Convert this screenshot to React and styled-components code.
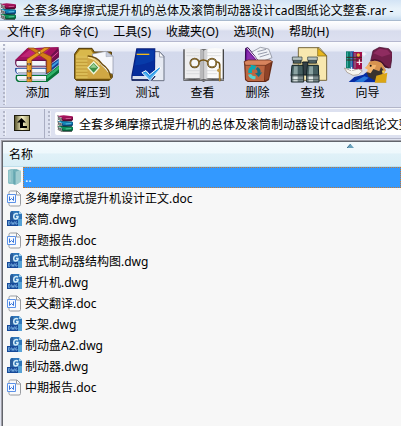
import React from 'react';
import styled, { createGlobalStyle } from 'styled-components';

const ARCHIVE = '全套多绳摩擦式提升机的总体及滚筒制动器设计cad图纸论文整套.rar';

const MENUS = ['文件(F)', '命令(C)', '工具(S)', '收藏夹(O)', '选项(N)', '帮助(H)'];

const FILES = [
  { name: '多绳摩擦式提升机设计正文.doc', type: 'doc' },
  { name: '滚筒.dwg', type: 'dwg' },
  { name: '开题报告.doc', type: 'doc' },
  { name: '盘式制动器结构图.dwg', type: 'dwg' },
  { name: '提升机.dwg', type: 'dwg' },
  { name: '英文翻译.doc', type: 'doc' },
  { name: '支架.dwg', type: 'dwg' },
  { name: '制动盘A2.dwg', type: 'dwg' },
  { name: '制动器.dwg', type: 'dwg' },
  { name: '中期报告.doc', type: 'doc' },
];

const GlobalStyle = createGlobalStyle`
  html, body, #root {
    height: 100%;
  }

  body {
    margin: 0;
    overflow: hidden;
    background: #f7f7f7;
  }

  body, button, input, table {
    font-family: "Noto Sans", "Noto Sans CJK SC", sans-serif;
    font-size: 12px;
    line-height: 16px;
    color: #000;
  }

  button {
    padding: 0;
    border: 0;
    background: none;
  }

  svg {
    display: block;
    flex: none;
  }
`;

const Window = styled.div`
  display: flex;
  flex-direction: column;
  height: 100%;
  background: #dfe3f0;
`;

const TitleBar = styled.header`
  display: flex;
  align-items: center;
  gap: 6px;
  height: 21px;
  flex: none;
  box-sizing: border-box;
  padding-top: 2px;
  border-bottom: 1px solid #a9bace;
  background: linear-gradient(to bottom, #d3e4f5, #e8f2fa 45%, #e0edf8 75%, #c5daef);
  white-space: nowrap;
  overflow: hidden;
`;

const Title = styled.h1`
  margin: 0;
  font-size: 12px;
  font-weight: 400;
`;

const MenuBar = styled.nav`
  display: flex;
  align-items: center;
  gap: 15px;
  height: 21px;
  flex: none;
  box-sizing: border-box;
  padding: 2px 0 0 7px;
  border-bottom: 1px solid #b5b8cf;
  background: linear-gradient(#ffffff, #eef0f8 40%, #d8dced 50%, #dde0f0);
  white-space: nowrap;
`;

const MenuButton = styled.button`
  flex: none;
`;

const Grip = styled.span`
  width: 2px;
  flex: none;
  align-self: stretch;
  margin: 2px 5px 2px 3px;
  background: repeating-linear-gradient(#b2b6c8 0 2px, transparent 2px 4px);
  box-shadow: 1px 0 #eef0f8;
`;

const ToolBar = styled.div`
  display: flex;
  height: 66px;
  flex: none;
  box-sizing: border-box;
  border-bottom: 1px solid #b3b6c9;
  background: linear-gradient(#fbfcfe, #e8ebf6 9px, #d3d9ec 10px, #d7dcee);
  overflow: hidden;
`;

const ToolButton = styled.button`
  display: flex;
  flex-direction: column;
  align-items: center;
  width: 55px;
  flex: none;
  padding-top: 4px;
  gap: 1px;
`;

const AddressBar = styled.div`
  display: flex;
  align-items: stretch;
  height: 31px;
  flex: none;
  box-sizing: border-box;
  border-top: 1px solid #f5f6fb;
  border-bottom: 1px solid #b3b6c9;
  background: #dde1f0;
`;

const UpButton = styled.button`
  display: flex;
  align-items: center;
  padding: 0 14px 2px 4px;
  border-right: 1px solid #a9adc2;
`;

const Address = styled.label`
  display: flex;
  align-items: center;
  gap: 5px;
  flex: 1;
  min-width: 0;
  margin: 3px 0;
  padding-left: 2px;
  border-radius: 2px 0 0 2px;
  background: #fff;
`;

const AddressInput = styled.input`
  flex: 1;
  min-width: 0;
  padding: 2px 0 0;
  border: 0;
  outline: 0;
  background: none;
`;

const Panel = styled.main`
  flex: 1;
  min-height: 0;
  margin: 1px 0 0 1px;
  border-top: 1px solid #a0a0a8;
  border-left: 1px solid #a0a0a8;
`;

const Sheet = styled.div`
  height: 100%;
  box-sizing: border-box;
  border-top: 1px solid #62656c;
  border-left: 1px solid #62656c;
  background: #f7f7f7;
  overflow: hidden;
`;

const FileTable = styled.table`
  width: 100%;
  border-collapse: collapse;
`;

const HeadCell = styled.th`
  position: relative;
  height: 24px;
  padding: 0;
  box-sizing: border-box;
  border-bottom: 1px solid #bfdfec;
  background: linear-gradient(#f3fafd, #eef8fc 45%, #e0f1f8 50%, #d9eef6);
  text-align: left;
`;

const SortButton = styled.button`
  display: block;
  width: 100%;
  padding: 2px 0 0 6px;
  text-align: left;
`;

const SortMark = styled.svg`
  position: absolute;
  top: 2px;
  left: 50%;
  margin-left: 145px;
`;

const FileCell = styled.td`
  padding: 0;
`;

const FileRow = styled.div`
  display: flex;
  align-items: center;
  height: 21px;
  padding-left: 4px;
`;

const FileName = styled.span`
  flex: 1;
  box-sizing: border-box;
  height: 21px;
  padding: 2px 1px 0;
  border: 1px dotted ${({ $selected }) => ($selected ? '#c87830' : 'transparent')};
  background: ${({ $selected }) => ($selected ? '#3399ff' : 'transparent')};
  color: ${({ $selected }) => ($selected ? '#fff' : '#000')};
  white-space: nowrap;
`;

// the big toolbar drawings are drawn on a grid three times their size
const ToolSvg = ({ left, children }) => (
  <svg width="48" height="38" viewBox={`${left} 18 144 114`} aria-hidden="true">
    {children}
  </svg>
);

const AddIcon = () => (
  <ToolSvg left={42}>
    <path d="M48 105 L140 105 L177 76 V98 L142 126 H54 Q44 122 48 105Z" fill="#087438" />
    <path d="M140 108 L177 78 V88 L140 118Z" fill="#31b46a" />
    <path d="M46 84 L137 84 L176 56 V74 L140 103 H54 Q43 98 46 84Z" fill="#123f96" />
    <path d="M140 87 L176 60 V67 L140 96Z" fill="#3f9ddd" />
    <path d="M46 60 L82 25 L176 22 L177 52 L140 82 H54 Q43 77 46 60Z" fill="#67104b" />
    <path d="M46 60 L82 25 L176 22 L141 59Z" fill="#a3125f" />
    <path d="M61 51 L91 28 L151 25 L123 50Z" fill="#c02474" />
    <path d="M140 61 L176 28 V48 L140 77Z" fill="#7a0f50" />
    <path d="M142 65 L175 36" stroke="#df4c9c" strokeWidth="3" />
    <path d="M50 63 H137 V79 H54 Q46 73 50 63Z M50 86 H137 V101 H54 Q46 95 50 86Z M52 108 H138 V123 H58 Q48 118 52 108Z" fill="#f4f5fb" />
    <path d="M54 77 H136 M54 98 H136 M57 120 H137" stroke="#a5adbc" strokeWidth="3" />
    <path d="M84 24 L101 24 L154 50 V92 L140 100 V60Z" fill="#d47e19" stroke="#8d4911" strokeWidth="2" />
    <path d="M133 23 L150 23 L95 60 V125 H81 V57Z" fill="#e79820" stroke="#914c0b" strokeWidth="2" />
    <path d="M84 59 V124" stroke="#ffd35a" strokeWidth="2" />
    <path d="M82 69 h11 v7 h-11z M82 90 h11 v7 h-11z M82 111 h11 v7 h-11z" fill="#503016" />
    <circle cx="87" cy="72" r="2" fill="#fff" />
    <circle cx="87" cy="93" r="2" fill="#fff" />
    <circle cx="87" cy="114" r="2" fill="#fff" />
    <circle cx="118" cy="38" r="4" fill="#fff0a8" stroke="#6d3c0e" strokeWidth="2" />
  </ToolSvg>
);

const ExtractIcon = () => (
  <ToolSvg left={207}>
    <path d="M224 116 V42 L236 25 H276 L283 36 H334 L337 112 L328 121 H229Z" fill="#9a7210" stroke="#4a3508" strokeWidth="3" />
    <path d="M227 46 L240 29 H272 L279 40 L276 48 H227Z" fill="#d9b84c" />
    <path d="M227 47 H328 V117 H227Z" fill="#dbbc56" />
    <path d="M228 57 H320 M228 67 H320 M228 77 H318 M228 87 H312 M228 97 H314 M228 107 H320" stroke="#bf9836" strokeWidth="3" />
    <path d="M277 42 L318 34 L339 48 V102 L310 94 L280 63Z" fill="#f6f7fb" stroke="#888fa1" strokeWidth="2" />
    <path d="M318 34 V50 L338 49Z" fill="#c6ccdb" stroke="#7e8798" />
    <path d="M262 48 Q295 56 304 76 Q323 91 334 115 L329 120 L263 115Z" fill="#d0a744" />
    <path d="M263 48 Q291 49 307 73 Q329 87 333 115" fill="none" stroke="#6d4c0b" strokeWidth="4" />
    <path d="M264 52 Q288 56 299 75" fill="none" stroke="#f8df91" strokeWidth="4" />
    <path d="M281 66 L297 83 L281 101 L264 83Z" fill="#3f9147" stroke="#eff5db" strokeWidth="4" />
    <path d="M281 71 L291 83 H270Z" fill="#99cf92" />
    <path d="M226 118 H330" stroke="#725008" strokeWidth="4" />
  </ToolSvg>
);

const TestIcon = () => (
  <ToolSvg left={-3}>
    <path d="M79 35 H104 L117 49 V122 H82Z" fill="#e6eaf3" stroke="#6c7485" strokeWidth="3" />
    <path d="M103 35 L104 51 H117Z" fill="#fff" stroke="#7b8497" strokeWidth="2" />
    <path d="M34 25 H91 L90 108 Q87 118 76 121 H20 Q18 115 19 107Z" fill="#071d73" />
    <path d="M36 28 H90 L88 107 H22Z" fill="#062d9c" />
    <path d="M39 31 H87 L86 61 Q62 75 30 76Z" fill="#0849b5" opacity=".5" />
    <path d="M23 108 H83 L77 119 H22Z" fill="#d9dfed" />
    <path d="M20 120 H78 L90 108" fill="none" stroke="#00104f" strokeWidth="5" />
    <path d="M35 43 H73" stroke="#efb91b" strokeWidth="4" />
    <path d="M51 98 L63 92 L74 104 L103 81 L108 84 L75 122Z" fill="#58b4f3" stroke="#fff" strokeWidth="3" />
    <path d="M55 99 L62 97 L74 110 L101 86" fill="none" stroke="#168bdf" strokeWidth="3" />
  </ToolSvg>
);

const ViewIcon = () => (
  <ToolSvg left={162}>
    <path d="M175 28 H297 V122 H242 L236 126 L229 122 H175Z" fill="#454546" />
    <path d="M179 26 Q215 21 235 31 V117 Q211 111 179 116Z" fill="#eeeeef" />
    <path d="M238 31 Q259 20 293 26 V116 Q260 111 238 117Z" fill="#fafafa" />
    <path d="M225 28 L236 32 V118 L224 114Z" fill="#b9b9bb" />
    <path d="M238 32 L247 28 V113 L238 117Z" fill="#d5d5d7" />
    <path d="M184 38 H224 M184 47 H222 M184 92 H226 M184 101 H225 M245 38 H289 M245 47 H287 M244 92 H276 M244 101 H276" stroke="#d0d1d4" strokeWidth="2" />
    <path d="M176 119 Q213 112 236 121 Q261 112 296 119" fill="none" stroke="#9a9a9d" strokeWidth="3" />
    <circle cx="209" cy="69" r="13" fill="#f5f6f7" stroke="#48340d" strokeWidth="5" />
    <circle cx="261" cy="69" r="13" fill="#fff" stroke="#48340d" strokeWidth="5" />
    <circle cx="209" cy="69" r="13" fill="none" stroke="#c8a454" strokeWidth="2" />
    <circle cx="261" cy="69" r="13" fill="none" stroke="#c8a454" strokeWidth="2" />
    <path d="M222 65 Q235 55 248 65 M275 66 Q286 65 284 82 V124" fill="none" stroke="#735313" strokeWidth="5" />
    <path d="M284 84 V123" stroke="#c29237" strokeWidth="3" />
    <circle cx="281" cy="91" r="5" fill="#c29a45" />
  </ToolSvg>
);

const DeleteIcon = () => (
  <ToolSvg left={-3}>
    <path d="M47 38 L76 22 L101 27 L111 53 L78 66 L55 60Z" fill="#f0f2f7" stroke="#777b89" strokeWidth="2" />
    <path d="M67 35 L93 28 M69 43 L97 36 M74 51 L103 42" stroke="#969bab" strokeWidth="3" />
    <path d="M32 25 L39 23 L72 65 H31Z" fill="#6e1597" stroke="#33094f" strokeWidth="3" />
    <path d="M37 32 L62 61 H36Z" fill="#8a2fb0" />
    <path d="M37 25 L70 64" stroke="#fff" strokeWidth="3" />
    <path d="M27 65 L37 60 H103 L113 66 L102 120 L92 126 H38 L30 120Z" fill="#672b17" />
    <path d="M31 71 H90 L87 123 H39 L33 118Z" fill="#bd6742" />
    <path d="M91 73 L108 65 L100 116 L89 122Z" fill="#8f4227" />
    <path d="M27 65 L39 60 H104 L113 65 L92 76 H31Z" fill="#d8845d" stroke="#5f2915" strokeWidth="2" />
    <path d="M40 99 Q38 85 49 79 L45 74 L64 77 L58 91 L54 86 Q49 91 51 99Z" fill="#08aab4" />
    <path d="M68 81 Q79 88 76 98 L82 97 L71 111 L60 100 L67 99 Q69 91 62 88Z" fill="#126d83" />
    <path d="M39 104 L48 102 Q52 110 62 109 L61 118 Q44 118 39 104Z" fill="#59d2cd" />
  </ToolSvg>
);

const FindIcon = () => (
  <ToolSvg left={162}>
    <path d="M190 23 H253 L275 47 V121 H190Z" fill="#f8e8af" stroke="#77683b" strokeWidth="3" />
    <path d="M248 24 V48 H275Z" fill="#e8b71d" stroke="#796115" strokeWidth="2" />
    <path d="M203 66 H219 V105 H203Z" fill="#344046" stroke="#11191d" strokeWidth="3" />
    {[0, 46].map((x) => (
      <g key={x} transform={`translate(${x} 0)`}>
        <path d="M175 55 H198 V70 H175Z" fill="#4d6063" stroke="#182426" strokeWidth="3" />
        <path d="M172 51 H201 V61 H172Z" fill="#b7c3c1" stroke="#293638" strokeWidth="2" />
        <path d="M171 76 H204 L205 107 H168Z" fill="#455e60" stroke="#122225" strokeWidth="3" />
        <path d="M177 79 H188 V105 H175Z" fill="#8ba3a2" />
        <path d="M169 105 H206 V126 H169Z" fill="#7d8c8d" stroke="#192729" strokeWidth="3" />
        <path d="M175 107 H188 V124 H175Z" fill="#e0e8e6" />
        <path d="M168 108 H206 M169 119 H206" stroke="#314144" strokeWidth="2" />
        <path d="M173 72 H203" stroke="#b7a568" strokeWidth="3" />
      </g>
    ))}
  </ToolSvg>
);

const WizardIcon = () => (
  <ToolSvg left={327}>
    <path d="M341 126 L358 111 L385 104 L401 91 L427 100 L455 127Z" fill="#062ca4" />
    <path d="M358 125 L388 109 L401 113 L385 126Z" fill="#2877d8" />
    <path d="M396 79 L403 66 L412 60 L439 66 L453 91 L445 104 L424 115 L402 100Z" fill="#d69350" />
    <path d="M401 73 L389 84 L399 89 L393 98 L413 99 L424 76Z" fill="#f3b66e" />
    <path d="M394 96 L407 100 L415 87 L433 94 L438 80 L447 92 L438 108 L421 122 L400 110Z" fill="#3a332e" />
    <path d="M424 107 L457 98 L453 128 H419Z" fill="#dba615" />
    <path d="M407 63 L414 32 L433 22 L461 26 L473 40 L466 84 L450 82 L440 66 L419 60Z" fill="#721f4a" stroke="#3e0b27" strokeWidth="2" />
    <path d="M415 40 L433 26 L457 30 L467 42 L441 50Z" fill="#8f2c60" />
    <path d="M410 61 Q434 55 449 77 L461 84" fill="none" stroke="#451027" strokeWidth="4" />
    <circle cx="407" cy="77" r="3" fill="#17120e" />
    <circle cx="445" cy="95" r="4" fill="#f5d34a" />
    <path d="M333 34 H346 V85 H333Z" fill="#087c68" />
    <path d="M346 34 H357 V87 H346Z" fill="#15439a" />
    <path d="M355 36 H381 V88 H355Z" fill="#a10e49" />
    <path d="M337 37 V82 M350 37 V82 M360 39 V85" stroke="#67c9ca" strokeWidth="2" />
    <path d="M334 52 H381 M334 60 H381" stroke="#44291e" strokeWidth="3" />
    <circle cx="370" cy="45" r="5" fill="#e7b842" />
    <path d="M328 84 L349 92 L371 87 L382 93 L370 104 L354 106 L336 97Z" fill="#f7f5ef" stroke="#9b8d7d" strokeWidth="2" />
    <path d="M373 58 V75 M365 67 H382 M350 81 V94 M343 88 H358 M387 36 V49 M381 42 H394" stroke="#fff" strokeWidth="3" />
  </ToolSvg>
);

const TOOLS = [
  { label: '添加', Icon: AddIcon },
  { label: '解压到', Icon: ExtractIcon },
  { label: '测试', Icon: TestIcon },
  { label: '查看', Icon: ViewIcon },
  { label: '删除', Icon: DeleteIcon },
  { label: '查找', Icon: FindIcon },
  { label: '向导', Icon: WizardIcon },
];

const BOOKS = [
  { y: 32, cover: '#0f9a63', spine: '#07623c', shine: '#7fe3b6' },
  { y: 17, cover: '#1590c0', spine: '#0b4a80', shine: '#8ad8f2' },
  { y: 1, cover: '#a8125c', spine: '#6d0a3c', shine: '#e678ae' },
];

const BooksIcon = () => (
  <svg width="17" height="17" viewBox="0 0 51 51" aria-hidden="true">
    {BOOKS.map(({ y, cover, spine, shine }) => (
      <g key={y} transform={`translate(0 ${y})`}>
        <path d="M2 2 L16 7 V17 L2 10Z" fill="#fff" />
        <path d="M1 1 L6 3 M2 5 L15 10 M3 8 L15 14 M2 11 L16 18" stroke="#151515" strokeWidth="2" />
        <path d="M2 2 L20 0 L47 3 L48 7 L16 8Z" fill={cover} />
        <path d="M16 7 L48 5 V14 L44 17 H17 L14 13Z" fill={spine} />
        <path d="M18 10 L46 8" stroke={cover} strokeWidth="5" />
        <path d="M26 10 L42 9" stroke={shine} strokeWidth="2" />
        <path d="M16 17 H45" stroke="#121418" strokeWidth="2" />
      </g>
    ))}
  </svg>
);

const UpIcon = () => (
  <svg width="16" height="16" viewBox="0 0 16 16" aria-hidden="true">
    <defs>
      <linearGradient id="up" x1="0" y1="0" x2="1" y2="0">
        <stop offset="0" stopColor="#5d5932" />
        <stop offset=".5" stopColor="#f7f2c6" />
        <stop offset="1" stopColor="#a09a68" />
      </linearGradient>
    </defs>
    <path d="M0 0H16V16H0Z" fill="#1d1b0b" />
    <path d="M1 1H15V15H1Z" fill="url(#up)" />
    <path d="M7.5 3L12 7.5H9V11H13V13H6V7.5H3Z" fill="#000" />
  </svg>
);

const FolderIcon = () => (
  <svg width="16" height="18" viewBox="0 0 16 18" aria-hidden="true">
    <path d="M1 2L4 1H8V16H2L1 15Z" fill="#8cc1c7" />
    <path d="M6 2L9 1L12 2V15L8 17L6 16Z" fill="#6faeb7" />
    <path d="M8 4L13 2L14 3V14L8 17Z" fill="#a0ccd0" />
    <path d="M3 3V14" stroke="#acd4d5" />
    <path d="M8 4V16" stroke="#5d9eaa" />
  </svg>
);

const DocIcon = () => (
  <svg width="16" height="17" viewBox="0 0 16 17" aria-hidden="true">
    <path d="M3.5 1H10L13.5 4.5V14.5Q13.5 16 12 16H3.5Q2 16 2 14.5V2.5Q2 1 3.5 1Z" fill="#fafafa" stroke="#989ba0" />
    <path d="M9.5 1V5H13.5" fill="none" stroke="#989ba0" />
    <path d="M.5 4.5H8.5V12.5H.5Z" fill="#f6f9ff" stroke="#5c92e8" />
    <path d="M2.5 6.5V10.5L4.5 8.5L6.5 10.5V6.5" fill="none" stroke="#3976da" />
  </svg>
);

const DwgIcon = () => (
  <svg width="16" height="16" viewBox="0 0 16 16" aria-hidden="true">
    <path d="M4 0H12L15 3V15H3V2Z" fill="#2f76b9" />
    <path d="M3 2L6 0V10H3Z" fill="#2b5d9b" />
    <path d="M11 8H15V15H10Z" fill="#56a2d6" />
    <path d="M12 0V3H15" fill="#a5d3ed" />
    <path d="M11 3Q8.5 1.5 7 4Q6 7.5 8.5 8Q11 8 11 5.5H9" fill="none" stroke="#d5edf9" strokeWidth="1.5" />
    <path d="M0 9H11V15H0Z" fill="#174a99" />
    <path d="M1.5 10.5V13.5H2.5Q4 12 2.5 10.5ZM4.5 10.5L5.2 13.5L6 11.5L6.8 13.5L7.5 10.5M10 11Q8.5 10 8.5 12Q8.5 14 10 13V12" fill="none" stroke="#82b7e7" strokeWidth=".8" />
  </svg>
);

const FileLine = ({ icon, name, selected }) => (
  <tr>
    <FileCell>
      <FileRow>
        {icon}
        <FileName $selected={selected}>{name}</FileName>
      </FileRow>
    </FileCell>
  </tr>
);

export default function App() {
  return (
    <>
      <GlobalStyle />
      <Window>
        <TitleBar>
          <BooksIcon />
          <Title>{ARCHIVE} -</Title>
        </TitleBar>

        <MenuBar>
          {MENUS.map((menu) => (
            <MenuButton key={menu}>{menu}</MenuButton>
          ))}
        </MenuBar>

        <ToolBar>
          <Grip />
          {TOOLS.map(({ label, Icon }) => (
            <ToolButton key={label}>
              <Icon />
              {label}
            </ToolButton>
          ))}
        </ToolBar>

        <AddressBar>
          <Grip />
          <UpButton aria-label="上一级">
            <UpIcon />
          </UpButton>
          <Grip />
          <Address>
            <BooksIcon />
            <AddressInput aria-label="地址" defaultValue={ARCHIVE} />
          </Address>
        </AddressBar>

        <Panel>
          <Sheet>
            <FileTable>
              <thead>
                <tr>
                  <HeadCell>
                    <SortButton>名称</SortButton>
                    <SortMark width="7" height="4" viewBox="0 0 7 4">
                      <path d="M3.5 0L7 4H0Z" fill="#6aa3bd" />
                      <path d="M3.5 0L0 4" stroke="#3d6f8c" />
                    </SortMark>
                  </HeadCell>
                </tr>
              </thead>
              <tbody>
                <FileLine icon={<FolderIcon />} name=".." selected />
                {FILES.map(({ name, type }) => (
                  <FileLine key={name} icon={type === 'doc' ? <DocIcon /> : <DwgIcon />} name={name} />
                ))}
              </tbody>
            </FileTable>
          </Sheet>
        </Panel>
      </Window>
    </>
  );
}
